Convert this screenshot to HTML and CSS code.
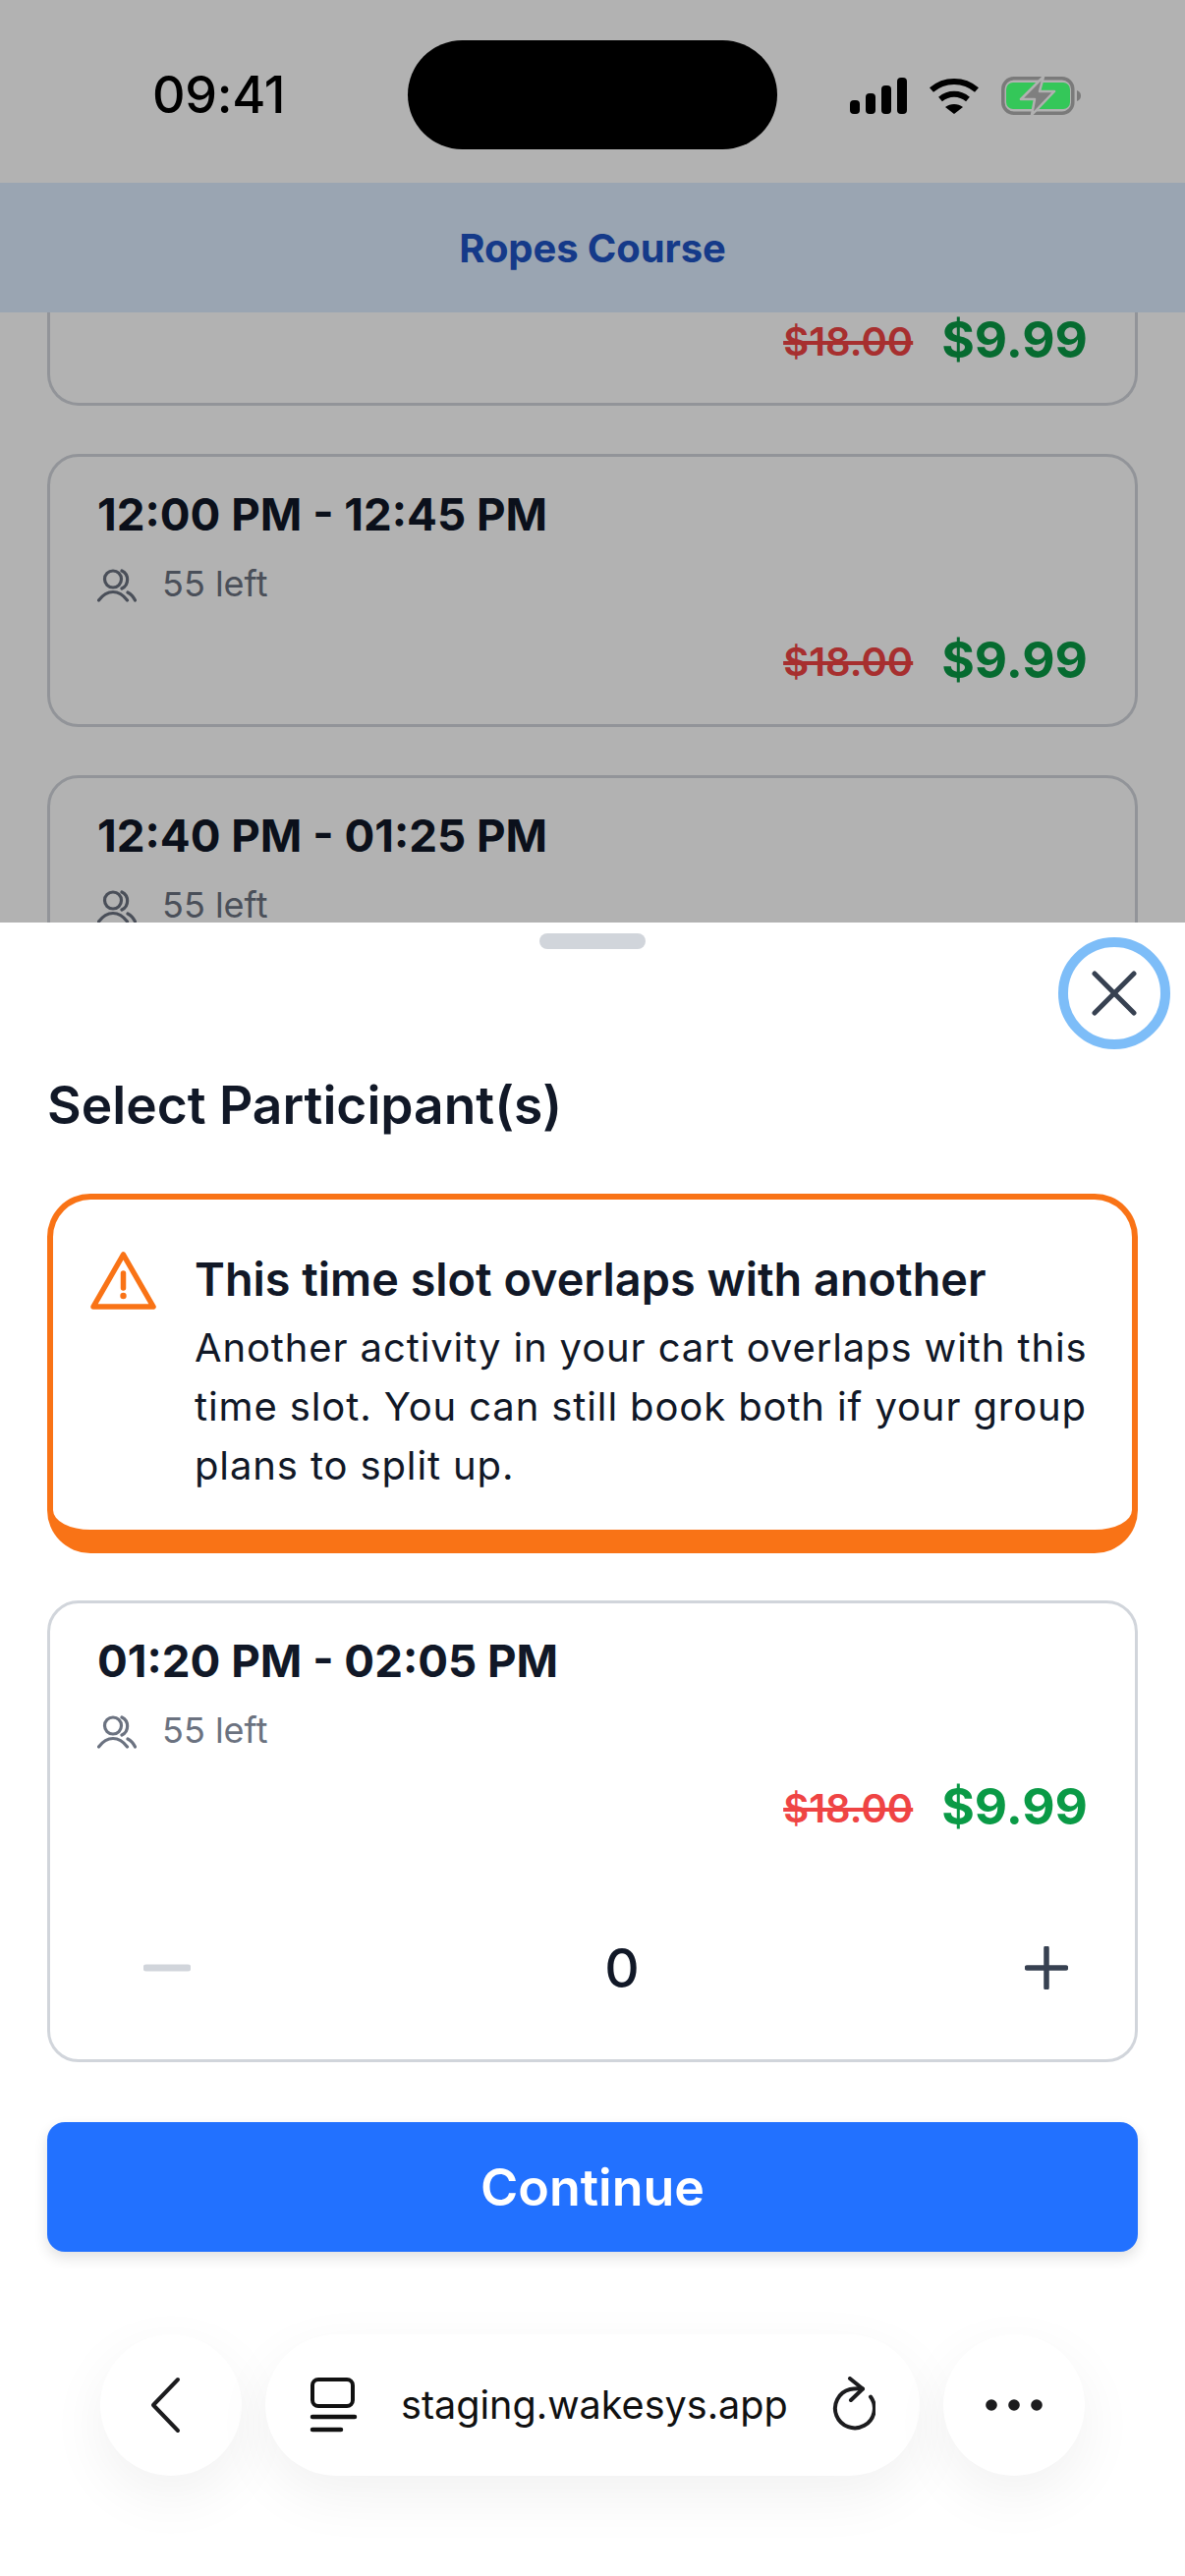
FILE: index.html
```html
<!DOCTYPE html>
<html lang="en">
<head>
<meta charset="utf-8">
<title>Ropes Course</title>
<link rel="stylesheet" href="styles.css">
</head>
<body>
<div class="page">
  <div class="status">
    <span class="clock">09:41</span>
    <div class="island"></div>
    <div class="status-icons">
      <svg class="sig" width="58" height="37" viewBox="0 0 58 37"><rect x="0" y="23" width="10" height="14" rx="4"/><rect x="16" y="16" width="10" height="21" rx="4"/><rect x="32" y="8" width="10" height="29" rx="4"/><rect x="48" y="0" width="10" height="37" rx="4"/></svg>
      <svg class="wifi" width="52" height="37" viewBox="0 0 52 37"><path d="M3 12.500C16 1 36 1 49 12.500" fill="none" stroke="#000" stroke-width="6"/><path d="M12 22c8.500-7 19.500-7 28 0" fill="none" stroke="#000" stroke-width="6"/><path d="M17 30c5-4 13-4 18 0l-9 7z"/></svg>
      <svg class="batt" width="82" height="42" viewBox="0 0 82 42"><rect x="1.800" y="3.800" width="71" height="35.500" rx="11" fill="none" stroke="#7a7a7a" stroke-width="3.500"/><rect x="5" y="8" width="65" height="27" rx="7" fill="#34c759"/><path d="M43 2L20 25H34L31 41L54 17H39Z" fill="#7f7f7f" stroke="#b1b1b1" stroke-width="2.500" stroke-linejoin="round"/><path d="M77 16c3 1 4 3 4 5.500s-1 4.500-4 5.500z" fill="#7a7a7a"/></svg>
    </div>
  </div>
  <div class="appbar">Ropes Course</div>

  <div class="list">
    <article class="slot slot-cut">
      <div class="prices"><s class="old">$18.00</s><span class="new">$9.99</span></div>
    </article>
    <article class="slot">
      <h3 class="slot-time">12:00 PM - 12:45 PM</h3>
      <div class="left">
        <svg class="people" width="40" height="34" viewBox="0 0 40 34"><circle cx="16" cy="10.500" r="8.500"/><path d="M25 2a10 10 0 0 1 0 18"/><path d="M1.500 32C6 26 11 23.500 16 23.500S26 26 30.500 32"/><path d="M31 24c3 1.500 5.500 4 7.500 8"/></svg>
        <span>55 left</span>
      </div>
      <div class="prices"><s class="old">$18.00</s><span class="new">$9.99</span></div>
    </article>
    <article class="slot">
      <h3 class="slot-time">12:40 PM - 01:25 PM</h3>
      <div class="left">
        <svg class="people" width="40" height="34" viewBox="0 0 40 34"><circle cx="16" cy="10.500" r="8.500"/><path d="M25 2a10 10 0 0 1 0 18"/><path d="M1.500 32C6 26 11 23.500 16 23.500S26 26 30.500 32"/><path d="M31 24c3 1.500 5.500 4 7.500 8"/></svg>
        <span>55 left</span>
      </div>
    </article>
  </div>

  <div class="scrim"></div>

  <section class="sheet">
    <div class="handle"></div>
    <button class="close" aria-label="Close">
      <svg width="46" height="46" viewBox="0 0 46 46"><path d="M3 3L43 43M43 3L3 43" fill="none" stroke="#374151" stroke-width="5" stroke-linecap="round"/></svg>
    </button>
    <h2 class="sheet-title">Select Participant(s)</h2>

    <div class="warn">
      <svg class="warn-icon" width="68" height="60" viewBox="0 0 68 60"><path d="M33.500 3L64 56H3Z" fill="none" stroke="#f97316" stroke-width="5.500" stroke-linejoin="round"/><path d="M33.500 22V37" fill="none" stroke="#f97316" stroke-width="5.500" stroke-linecap="round"/><circle cx="33.500" cy="45" r="3.200" fill="#f97316"/></svg>
      <div class="warn-text">
        <h4 class="warn-title">This time slot overlaps with another</h4>
        <p class="warn-body">Another activity in your cart overlaps with this<br>time slot. You can still book both if your group<br>plans to split up.</p>
      </div>
    </div>

    <article class="slot slot-open">
      <h3 class="slot-time">01:20 PM - 02:05 PM</h3>
      <div class="left">
        <svg class="people" width="40" height="34" viewBox="0 0 40 34"><circle cx="16" cy="10.500" r="8.500"/><path d="M25 2a10 10 0 0 1 0 18"/><path d="M1.500 32C6 26 11 23.500 16 23.500S26 26 30.500 32"/><path d="M31 24c3 1.500 5.500 4 7.500 8"/></svg>
        <span>55 left</span>
      </div>
      <div class="prices"><s class="old">$18.00</s><span class="new">$9.99</span></div>
      <div class="stepper">
        <span class="step step-minus"><svg width="48" height="8" viewBox="0 0 48 8"><path d="M3 4H45" stroke="#d1d5db" stroke-width="7" stroke-linecap="round"/></svg></span>
        <span class="count">0</span>
        <span class="step step-plus"><svg width="44" height="44" viewBox="0 0 44 44"><path d="M22 2V42M2.500 22H41.500" stroke="#374151" stroke-width="5.500" stroke-linecap="round"/></svg></span>
      </div>
    </article>

    <button class="continue">Continue</button>

    <nav class="browser">
      <span class="round round-back">
        <svg width="32" height="58" viewBox="0 0 32 58"><path d="M28 3L3 29L28 55" fill="none" stroke="#1c1c1e" stroke-width="4" stroke-linecap="round" stroke-linejoin="round"/></svg>
      </span>
      <div class="url">
        <svg width="50" height="56" viewBox="0 0 50 56"><rect x="4" y="2" width="41" height="27" rx="6" fill="none" stroke="#111" stroke-width="4"/><path d="M4 40H47M4 53H33" stroke="#111" stroke-width="4.500" stroke-linecap="round"/></svg>
        <span class="url-text">staging.wakesys.app</span>
        <svg class="reload" width="48" height="56" viewBox="0 0 48 56"><path d="M43 20.500a20 20 0 1 1-21-7.500c4-.800 8-.800 13-.500" fill="none" stroke="#1c1c1e" stroke-width="4" stroke-linecap="round"/><path d="M22 2L35 12.500L23 24" fill="none" stroke="#1c1c1e" stroke-width="4" stroke-linecap="round" stroke-linejoin="round"/></svg>
      </div>
      <span class="round">
        <svg width="58" height="12" viewBox="0 0 58 12"><circle cx="6" cy="6" r="5.800"/><circle cx="29" cy="6" r="5.800"/><circle cx="52" cy="6" r="5.800"/></svg>
      </span>
    </nav>
  </section>
</div>
</body>
</html>
```

FILE: styles.css
```css
* { box-sizing: border-box; }
html, body { margin: 0; padding: 0; }
body { font-family: Inter, "Noto Sans", sans-serif; color: #111827; background: #fff; }
h2, h3, h4, p { margin: 0; }
button { font-family: inherit; border: 0; padding: 0; }

.page { position: relative; width: 1206px; height: 2622px; overflow: hidden; background: #fff; }

.status { height: 186px; position: relative; z-index: 4; display: flex; align-items: flex-start; padding-top: 41px; padding-left: 155px; }
.clock { font-size: 52px; line-height: 60px; font-weight: 500; color: #000; letter-spacing: -0.3px; margin-top: 26px; width: 260px; flex: none; }
.island { width: 376px; height: 111px; border-radius: 56px; background: #000; flex: none; }
.status-icons { margin-left: 74px; margin-top: 37px; display: flex; align-items: flex-start; gap: 22px; }
.sig { margin-top: 1px; fill: #000; flex: none; }
.wifi { margin-top: 1px; fill: #000; flex: none; }
.batt { margin-top: -2px; flex: none; }

.appbar { height: 132px; background: #ddedff; display: flex; align-items: center; justify-content: center; font-size: 40px; font-weight: 650; letter-spacing: -0.1px; color: #1f54c4; }

.list { height: 621px; overflow: hidden; padding: 0 48px; display: flex; flex-direction: column; gap: 49px; }

.slot { height: 278px; flex: none; border: 3px solid #d1d5db; border-radius: 32px; padding: 0 48px; background: #fff; }
.slot-cut { height: 95px; border-top: 0; border-radius: 0 0 32px 32px; padding-top: 1px; }
.slot-cut .prices { margin-top: 0; height: 58px; }
.slot-time { font-size: 45.7px; line-height: 60px; font-weight: 650; color: #111827; margin-top: 29px; }
.left { display: flex; align-items: center; gap: 26px; margin-top: 10px; height: 60px; font-size: 36px; color: #6b7280; }
.people { fill: none; stroke: #6b7280; stroke-width: 3.2; stroke-linecap: round; margin-top: 3px; }
.prices { display: flex; justify-content: flex-end; align-items: center; gap: 29px; margin-top: 20px; height: 60px; }
.old { font-size: 40px; line-height: 48px; font-weight: 600; color: #ef4444; }
.new { font-size: 51.4px; line-height: 52px; font-weight: 650; color: #0a9a46; margin-top: -6px; }

.scrim { position: absolute; inset: 0; background: rgba(0, 0, 0, 0.3); z-index: 2; }

.sheet { position: absolute; left: 0; right: 0; top: 939px; bottom: 0; z-index: 3; background: #fff; padding: 0 48px; display: flex; flex-direction: column; }
.handle { width: 108px; height: 16px; border-radius: 8px; background: #d1d5db; align-self: center; margin-top: 11px; flex: none; }
.close { position: absolute; left: 1077px; top: 15px; width: 114px; height: 114px; border-radius: 50%; border: 10px solid #7dbdf8; background: #fff; display: flex; align-items: center; justify-content: center; }
.sheet-title { font-size: 53.3px; line-height: 64px; font-weight: 600; color: #111827; margin-top: 127px; }

.warn { margin-top: 58px; height: 366px; flex: none; border: 6px solid #f97316; border-bottom-width: 24px; border-radius: 44px; display: flex; padding: 53px 30px 0 38px; gap: 38px; background: #fff; }
.warn-icon { flex: none; }
.warn-text { margin-top: -2px; }
.warn-title { font-size: 46.8px; line-height: 60px; font-weight: 600; color: #111827; }
.warn-body { font-size: 40px; line-height: 60px; color: #111827; margin-top: 10px; letter-spacing: 0.88px; white-space: nowrap; }

.slot-open { height: 470px; margin-top: 48px; }
.stepper { display: flex; justify-content: space-between; align-items: center; margin-top: 77px; height: 110px; margin-right: 2px; }
.step { display: flex; justify-content: center; align-items: center; height: 80px; }
.step-minus { width: 142px; }
.step-plus { width: 80px; }
.count { font-size: 55px; font-weight: 500; color: #111827; }

.continue { height: 132px; margin-top: 61px; flex: none; border-radius: 18px; background: #2271ff; color: #fff; font-size: 52px; font-weight: 600; box-shadow: 0 6px 14px rgba(0, 0, 0, 0.12); }

.browser { display: flex; gap: 24px; margin: 84px 54px 0; height: 144px; flex: none; }
.round { width: 144px; height: 144px; flex: none; border-radius: 50%; background: #fff; display: flex; align-items: center; justify-content: center; box-shadow: 0 20px 60px rgba(0, 0, 0, 0.06); }
.round-back svg { margin-right: 10px; }
.url { flex: 1; border-radius: 72px; background: #fff; display: flex; align-items: center; padding: 0 40px 0 44px; box-shadow: 0 20px 60px rgba(0, 0, 0, 0.06); }
.url svg { flex: none; }
.url-text { font-size: 39.6px; font-weight: 400; color: #111; margin-left: 44px; white-space: nowrap; }
.reload { margin-left: 41px; margin-top: -2px; }
.round svg { fill: #1c1c1e; }
```
